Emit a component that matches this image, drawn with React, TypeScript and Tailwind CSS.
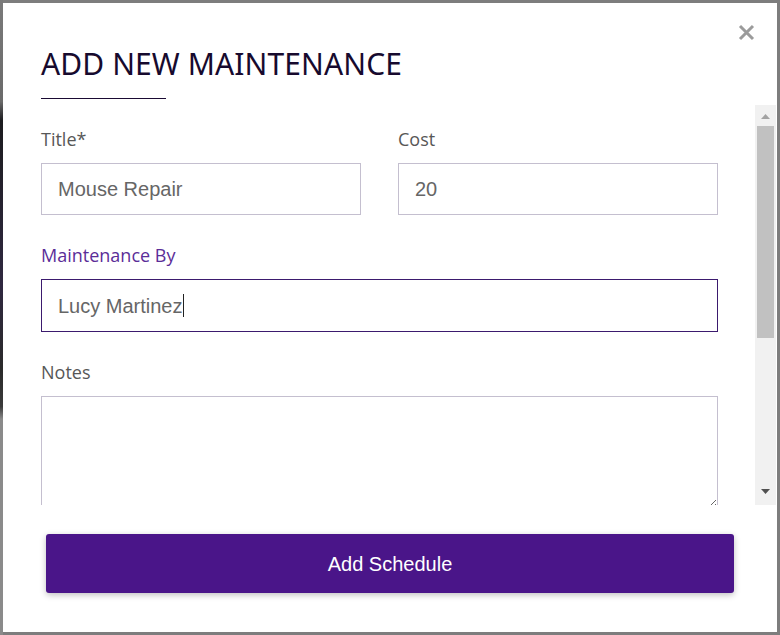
import React from "react";

export default function App() {
  const label = "block text-[18px] leading-[24px] mb-[12px] text-[#575757]";
  const input =
    "block w-full h-[52px] border border-[#c4bfcf] bg-white px-[16px] text-[20px] text-[#666] outline-none";
  const sans = { fontFamily: '"Open Sans", "Noto Sans", sans-serif' } as React.CSSProperties;
  const arial = { fontFamily: '"Liberation Sans", Arial, sans-serif' } as React.CSSProperties;
  return (
    <div className="w-[780px] h-[635px] bg-[#7d7d7d] flex">
      <div className="w-[3px] h-full bg-[linear-gradient(to_bottom,#7a7a7a_0%,#6a6a6a_16%,#1c1c1f_19%,#2f2840_45%,#2a2a2a_58%,#3a3a3a_64%,#8a8a8a_66%,#8a8a8a_100%)]" />
      <div className="flex-1 py-[3px] pr-[3px]">
        <div className="relative bg-white h-full flex flex-col">
          <button className="absolute top-[20px] right-[21px] w-[19px] h-[19px] flex items-center justify-center">
            <svg width="17" height="17" viewBox="0 0 17 17">
              <path d="M2 2 L15 15 M15 2 L2 15" stroke="#9b9b9b" strokeWidth="3" strokeLinecap="butt" />
            </svg>
          </button>
          <div className="pt-[43px] pl-[38px]">
            <h2
              className="text-[30px] leading-[36px] text-[#170a2e] tracking-[0.1px]"
              style={{ fontFamily: '"Noto Sans", "Open Sans", sans-serif', fontWeight: 400 }}
            >
              ADD NEW MAINTENANCE
            </h2>
            <div className="mt-[16px] w-[125px] h-[1px] bg-[#1a0a33]" />
          </div>
          <div className="mt-[6px] h-[400px] flex flex-none">
            <div className="flex-1 overflow-hidden" style={sans}>
              <div className="ml-[38px] w-[677px] pt-[22px] pb-[180px] flex flex-col gap-[28px]">
                <div className="grid grid-cols-2 gap-[37px]">
                  <div>
                    <label className={label}>Title*</label>
                    <input className={input} style={arial} defaultValue="Mouse Repair" />
                  </div>
                  <div>
                    <label className={label}>Cost</label>
                    <input className={input} style={arial} defaultValue="20" />
                  </div>
                </div>
                <div>
                  <label className="block text-[18px] leading-[24px] mb-[12px] text-[#5b2d98]">Maintenance By</label>
                  <div
                    className="flex items-center h-[53px] border border-[#3b1a6e] px-[16px] text-[20px] text-[#666]"
                    style={arial}
                  >
                    <span>Lucy Martinez</span>
                    <span className="inline-block w-[1px] h-[23px] bg-[#222]" />
                  </div>
                </div>
                <div>
                  <label className={label}>Notes</label>
                  <textarea className="block w-full h-[113px] border border-[#c4bfcf] bg-white outline-none resize-y" />
                </div>
              </div>
            </div>
            <div className="w-[21px] mr-[1px] bg-[#f1f1f1] flex flex-col">
              <div className="h-[17px] flex items-end justify-center pb-[3px]">
                <svg width="9" height="5" viewBox="0 0 9 5">
                  <path d="M0 5 L4.5 0 L9 5 Z" fill="#a3a3a3" />
                </svg>
              </div>
              <div className="flex-1 px-[2px] pt-[4px]">
                <div className="h-[212px] bg-[#c1c1c1]" />
              </div>
              <div className="h-[17px] flex items-start justify-center pt-[3px] mb-[2px]">
                <svg width="9" height="5" viewBox="0 0 9 5">
                  <path d="M0 0 L9 0 L4.5 5 Z" fill="#505050" />
                </svg>
              </div>
            </div>
          </div>
          <div className="pt-[29px] px-[43px]">
            <button
              className="w-full h-[59px] rounded-[3px] bg-[#4a1589] text-white text-[20px] shadow-[0_2px_6px_rgba(0,0,0,0.25)]"
              style={arial}
            >
              Add Schedule
            </button>
          </div>
        </div>
      </div>
    </div>
  );
}
